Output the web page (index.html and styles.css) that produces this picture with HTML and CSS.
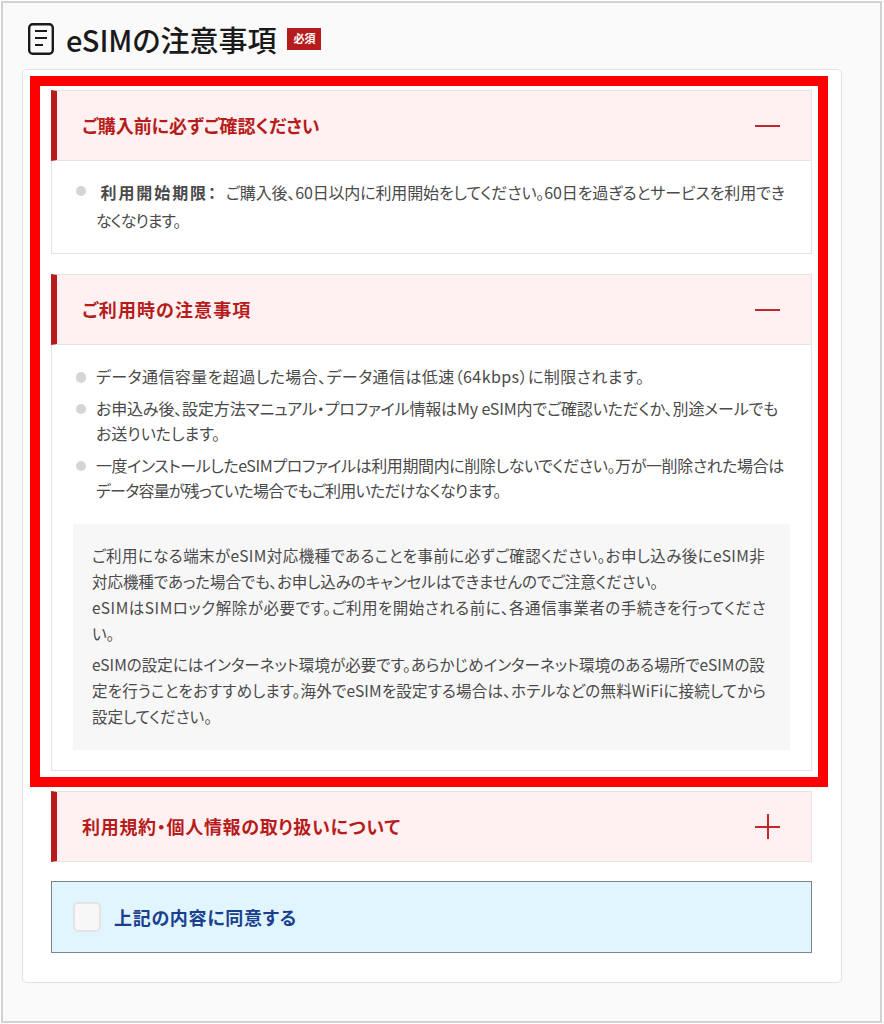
FILE: index.html
```html
<!DOCTYPE html>
<html lang="ja">
<head>
<meta charset="utf-8">
<title>eSIMの注意事項</title>
<link rel="stylesheet" href="styles.css">
</head>
<body>
<div class="frame">
  <header class="page-title">
    <svg class="doc-icon" viewBox="0 0 26 32" width="26" height="32" aria-hidden="true">
      <rect x="1.2" y="1.2" width="23.6" height="29.6" rx="3.5" fill="none" stroke="#1a1a1a" stroke-width="2.4"/>
      <path d="M7 8h12M7 15h12M7 22h8" fill="none" stroke="#1a1a1a" stroke-width="2"/>
    </svg>
    <h1>eSIMの注意事項</h1>
    <span class="badge">必須</span>
  </header>
  <main class="card">
    <section class="acc">
      <div class="acc-head"><h2>ご購入前に必ずご確認ください</h2><span class="minus"></span></div>
      <div class="acc-body first">
        <ul class="list lead">
          <li><span class="ln"><b>&nbsp;利用開始期限：</b><span class="sp-n15">ご購入後、60日以内に利用開始をしてください。60日を過ぎるとサービスを利用でき</span></span><span class="ln sp-n100">なくなります。</span></li>
        </ul>
      </div>
    </section>
    <section class="acc">
      <div class="acc-head"><h2 class="sp-p110">ご利用時の注意事項</h2><span class="minus"></span></div>
      <div class="acc-body">
        <ul class="list">
          <li><span class="ln sp-p42">データ通信容量を超過した場合、データ通信は低速（64kbps）に制限されます。</span></li>
          <li><span class="ln sp-n15">お申込み後、設定方法マニュアル・プロファイル情報はMy eSIM内でご確認いただくか、別途メールでも</span><span class="ln">お送りいたします。</span></li>
          <li><span class="ln sp-n40">一度インストールしたeSIMプロファイルは利用期間内に削除しないでください。万が一削除された場合は</span><span class="ln sp-n77">データ容量が残っていた場合でもご利用いただけなくなります。</span></li>
        </ul>
        <div class="note">
          <p><span class="ln sp-p41">ご利用になる端末がeSIM対応機種であることを事前に必ずご確認ください。お申し込み後にeSIM非</span><span class="ln sp-n5">対応機種であった場合でも、お申し込みのキャンセルはできませんのでご注意ください。</span></p>
          <p><span class="ln sp-p54">eSIMはSIMロック解除が必要です。ご利用を開始される前に、各通信事業者の手続きを行ってくださ</span><span class="ln">い。</span></p>
          <p class="gap"><span class="ln sp-p4">eSIMの設定にはインターネット環境が必要です。あらかじめインターネット環境のある場所でeSIMの設</span><span class="ln sp-p20">定を行うことをおすすめします。海外でeSIMを設定する場合は、ホテルなどの無料WiFiに接続してから</span><span class="ln">設定してください。</span></p>
        </div>
      </div>
    </section>
    <section class="acc last">
      <div class="acc-head"><h2 class="sp-p70">利用規約・個人情報の取り扱いについて</h2><span class="plus"></span></div>
    </section>
    <label class="agree"><span class="check"></span><span class="sp-p70">上記の内容に同意する</span></label>
    <div class="highlight"></div>
  </main>
</div>
</body>
</html>
```
FILE: styles.css
```css
* { box-sizing: border-box; }
html, body { margin: 0; padding: 0; background: #fff; }
body {
  width: 884px;
  height: 1024px;
  padding: 1px;
  font-family: "Noto Sans CJK JP", "Noto Sans", sans-serif;
  font-feature-settings: "palt";
  color: #4a4a4a;
}
.frame {
  width: 881px;
  height: 1022px;
  border: 2px solid #d2d2d2;
  background: #fafafa;
  padding: 0 0 0 19px;
}
.page-title {
  display: flex;
  align-items: center;
  height: 66px;
  padding: 6px 0 0 6px;
}
.doc-icon { flex: none; }
.page-title h1 {
  margin: 0 0 0 12px;
  font-size: 29px;
  font-weight: 500;
  line-height: 40px;
  color: #1a1a1a;
}
.badge {
  margin-left: 11px;
  width: 34px;
  height: 22px;
  background: #b71c1c;
  color: #fff;
  font-family: "Liberation Serif", "Noto Sans CJK JP", serif;
  font-size: 11px;
  font-weight: 700;
  line-height: 22px;
  text-align: center;
}
.card {
  position: relative;
  width: 820px;
  height: 914px;
  background: #fff;
  border: 1px solid #dfe3e8;
  border-radius: 5px;
  padding: 20px 29px 0 28px;
}
.acc { margin-bottom: 20px; }
.acc.last { margin-bottom: 19.5px; }
.acc-head {
  display: flex;
  align-items: center;
  justify-content: space-between;
  height: 70.5px;
  padding: 0 31px 0 25px;
  background: #fff1f1;
  border: 1px solid #e2e4e8;
  border-left: 6px solid #b71c1c;
}
.acc-head h2 {
  margin: 0;
  font-size: 18px;
  font-weight: 700;
  color: #b71c1c;
}
.minus, .plus {
  position: relative;
  display: block;
  width: 25px;
  height: 25px;
}
.minus::before, .plus::before {
  content: "";
  position: absolute;
  left: 0;
  top: 12px;
  width: 25px;
  height: 2px;
  background: #c0282d;
}
.plus::after {
  content: "";
  position: absolute;
  left: 11.5px;
  top: 0;
  width: 2px;
  height: 25px;
  background: #c0282d;
}
.acc-body {
  border: 1px solid #e0e4ea;
  border-top: 0;
  padding: 19.5px 21px 0 20.5px;
  font-size: 16px;
  height: 426.5px;
}
.acc-body.first { height: 93.5px; padding-top: 17px; }
.ln { display: block; white-space: nowrap; }
.list { margin: 0; padding: 0; list-style: none; }
.list li {
  position: relative;
  padding-left: 23.5px;
  margin-bottom: 6px;
  line-height: 25.5px;
}
.list.lead li { line-height: 28px; }
.list li::before {
  content: "";
  position: absolute;
  left: 3px;
  top: 8px;
  width: 10.5px;
  height: 10.5px;
  border-radius: 50%;
  background: #d5d5d5;
}
.list b {
  font-weight: 700;
  letter-spacing: 1.9px;
  margin-right: 8px;
  margin-left: -1px;
  color: #4a4a4a;
}
.note {
  margin-top: 20px;
  padding: 18.5px 19.5px 0;
  height: 226px;
  background: #f7f7f7;
  font-size: 15.5px;
}
.note p { margin: 0; line-height: 26px; }
.note p.gap { margin-top: 5px; }
.sp-n100 { letter-spacing: -1px; }
.sp-n77 { letter-spacing: -0.77px; }
.sp-n40 { letter-spacing: -0.4px; }
.sp-n15 { letter-spacing: -0.15px; }
.sp-n5 { letter-spacing: -0.05px; }
.sp-p4 { letter-spacing: 0.04px; }
.sp-p20 { letter-spacing: 0.2px; }
.sp-p41 { letter-spacing: 0.41px; }
.sp-p42 { letter-spacing: 0.42px; }
.sp-p54 { letter-spacing: 0.54px; }
.sp-p70 { letter-spacing: 0.7px; }
.sp-p110 { letter-spacing: 1.1px; }
.agree {
  display: flex;
  align-items: center;
  gap: 13px;
  height: 72px;
  padding-left: 21px;
  background: #e1f5fe;
  border: 1px solid #7d8686;
  font-size: 18px;
  font-weight: 700;
  color: #1a3f8f;
}
.check {
  width: 28px;
  height: 30px;
  background: #f7f7f7;
  border: 2px solid #e4e4e4;
  border-radius: 5px;
}
.highlight {
  position: absolute;
  left: 7px;
  top: 6px;
  width: 798px;
  height: 711px;
  border: 10px solid #f00;
  pointer-events: none;
}
```
